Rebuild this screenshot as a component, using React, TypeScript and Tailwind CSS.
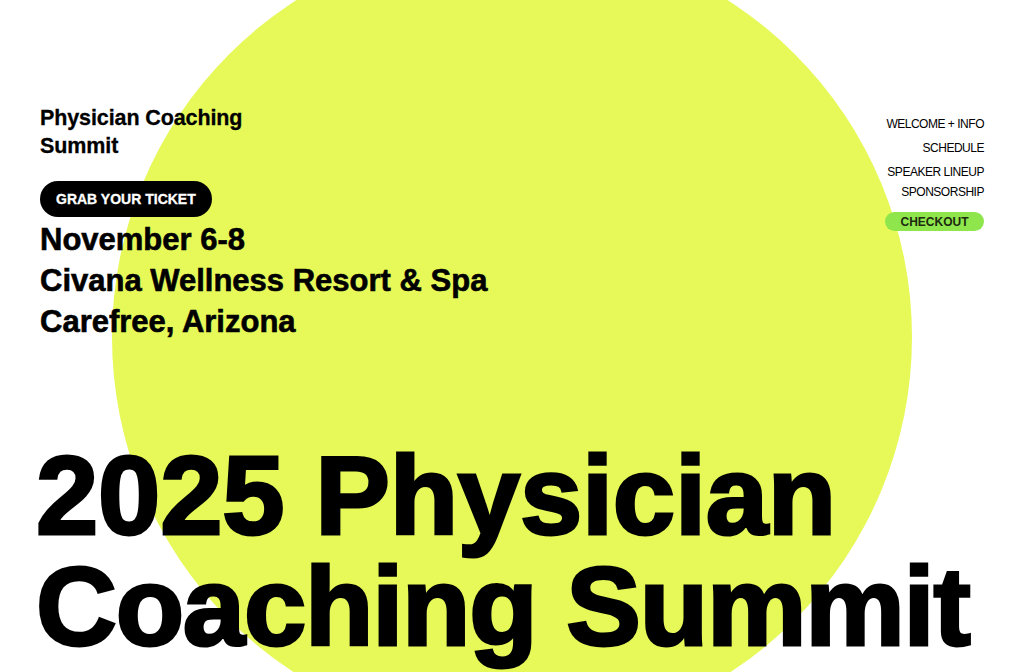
import * as React from 'react';

const navLinks = [
  { label: 'WELCOME + INFO', className: '' },
  { label: 'SCHEDULE', className: 'mt-2' },
  { label: 'SPEAKER LINEUP', className: 'mt-2' },
  { label: 'SPONSORSHIP', className: 'mt-1' },
];

export default function App() {
  return (
    <div
      className="relative h-[672px] w-full overflow-hidden bg-white text-black"
      style={{ fontFamily: '"Liberation Sans", Arial, sans-serif' }}
    >
      {/* decorative backdrop */}
      <div className="pointer-events-none absolute left-[112px] top-[-63px] h-[800px] w-[800px] rounded-full bg-[#e6f958]" />

      <div className="relative flex flex-col px-10">
        <header className="flex items-start justify-between pt-[104px]">
          <div className="flex flex-col items-start">
            <h2 className="text-[21.5px] font-bold leading-[28px] tracking-[-0.005em] [-webkit-text-stroke:0.3px_black]">
              Physician Coaching
              <br />
              Summit
            </h2>
            <a
              href="#"
              className="mt-[21px] flex h-9 items-center rounded-full bg-black px-4 text-[14px] font-bold text-white [-webkit-text-stroke:0.3px_white]"
            >
              GRAB YOUR TICKET
            </a>
            <div className="mt-[2px] text-[31px] font-bold leading-[41px] [-webkit-text-stroke:0.6px_black]">
              <p>November 6-8</p>
              <p>Civana Wellness Resort &amp; Spa</p>
              <p>Carefree, Arizona</p>
            </div>
          </div>

          <nav className="mt-[12px] flex flex-col items-end">
            {navLinks.map((link) => (
              <a
                key={link.label}
                href="#"
                className={`text-[12px] leading-4 tracking-[-0.04em] ${link.className}`}
              >
                {link.label}
              </a>
            ))}
            <a
              href="#"
              className="mt-[12px] flex h-[19px] w-[99px] items-center justify-center rounded-full bg-[#8ee64c] text-[12px] font-bold leading-none text-[#1c2a10]"
            >
              CHECKOUT
            </a>
          </nav>
        </header>

        <h1 className="-ml-1 mt-[98px] whitespace-nowrap text-[112px] font-bold leading-[111px] [-webkit-text-stroke:3px_black]">
          <span className="tracking-[-0.002em]">2025 Physician</span>
          <br />
          <span className="tracking-[-0.011em]">Coaching Summit</span>
        </h1>
      </div>
    </div>
  );
}
